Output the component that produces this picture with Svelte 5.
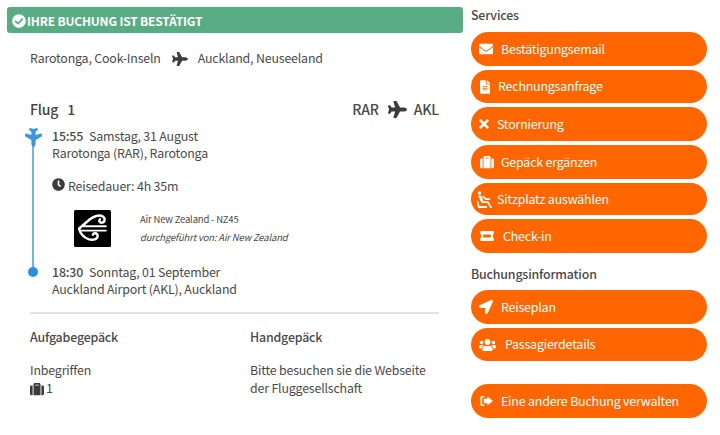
<script>
  const plane = 'M480 192H365.71L260.61 8.06A16.014 16.014 0 0 0 246.71 0h-65.5c-10.63 0-18.3 10.17-15.38 20.39L214.86 192H112l-43.2-57.6c-3.02-4.03-7.77-6.4-12.8-6.4H16.01C5.6 128-2.04 137.78.49 147.88L32 256 .49 364.12C-2.04 374.22 5.6 384 16.01 384H56c5.04 0 9.78-2.37 12.8-6.4L112 320h102.86l-49.03 171.6c-2.92 10.22 4.75 20.4 15.38 20.4h65.5c5.74 0 11.04-3.08 13.89-8.06L365.71 320H480c35.35 0 96-28.65 96-64s-60.65-64-96-64z'
  const suitcase = 'M128 480h256V80c0-26.5-21.5-48-48-48H176c-26.5 0-48 21.5-48 48v400zm64-384h128v32H192V96zm320 80v256c0 26.5-21.5 48-48 48h-48V128h48c26.5 0 48 21.5 48 48zM96 480H48c-26.5 0-48-21.5-48-48V176c0-26.5 21.5-48 48-48h48v352z'

  const services = [
    { label: 'Bestätigungsemail', vb: '0 0 512 512', w: 14, ih: 14, left: 8, gap: 8, h: 34, d: 'M502.3 190.8c3.9-3.1 9.7-.2 9.7 4.7V400c0 26.5-21.5 48-48 48H48c-26.5 0-48-21.5-48-48V195.6c0-5 5.7-7.8 9.7-4.7 22.4 17.4 52.1 39.5 154.1 113.6 21.1 15.4 56.7 47.8 92.2 47.6 35.7.3 72-32.8 92.3-47.6 102-74.1 131.6-96.3 154-113.7zM256 320c23.2.4 56.6-29.2 73.4-41.4 132.7-96.3 142.8-104.7 173.4-128.7 5.8-4.5 9.2-11.5 9.2-18.9v-19c0-26.5-21.5-48-48-48H48C21.5 64 0 85.500 0 112v19c0 7.4 3.4 14.3 9.2 18.9 30.6 23.9 40.7 32.4 173.4 128.7 16.8 12.2 50.2 41.8 73.4 41.4z' },
    { label: 'Rechnungsanfrage', vb: '0 0 384 512', w: 10, ih: 14, left: 9, gap: 8, h: 33, d: 'M224 136V0H24C10.7 0 0 10.7 0 24v464c0 13.3 10.7 24 24 24h336c13.3 0 24-10.7 24-24V160H248c-13.2 0-24-10.8-24-24zm64 236c0 6.6-5.4 12-12 12H108c-6.6 0-12-5.4-12-12v-8c0-6.6 5.4-12 12-12h168c6.6 0 12 5.4 12 12v8zm0-64c0 6.6-5.4 12-12 12H108c-6.6 0-12-5.4-12-12v-8c0-6.6 5.4-12 12-12h168c6.6 0 12 5.4 12 12v8zm0-72v8c0 6.6-5.4 12-12 12H108c-6.6 0-12-5.4-12-12v-8c0-6.6 5.4-12 12-12h168c6.6 0 12 5.4 12 12zm96-114.1v6.1H256V0h6.1c6.4 0 12.5 2.5 17 7l97.9 98c4.5 4.5 7 10.6 7 16.9z' },
    { label: 'Stornierung', vb: '0 0 352 512', w: 10, ih: 14, left: 8, gap: 8, h: 34, d: 'M242.72 256l100.07-100.07c12.28-12.28 12.28-32.19 0-44.48l-22.24-22.24c-12.28-12.28-32.19-12.28-44.48 0L176 189.28 75.93 89.21c-12.28-12.28-32.19-12.28-44.48 0L9.21 111.45c-12.28 12.28-12.28 32.19 0 44.48L109.28 256 9.21 356.07c-12.28 12.28-12.28 32.19 0 44.48l22.24 22.24c12.28 12.28 32.2 12.28 44.48 0L176 322.72l100.07 100.07c12.28 12.28 32.2 12.28 44.48 0l22.24-22.24c12.28-12.28 12.28-32.19 0-44.48L242.72 256z' },
    { label: 'Gepäck ergänzen', vb: '0 0 512 512', w: 14, ih: 14, left: 9, gap: 7, h: 34, d: suitcase },
    { label: 'Sitzplatz auswählen', vb: '0 0 15 17', w: 15, ih: 17, left: 6, gap: 5, h: 32, d: 'M2.500 .2a1.700 1.700 0 1 1 0 3.400 1.700 1.700 0 0 1 0-3.400zM2.300 4.300c1-.4 1.900 0 2.200 1l1.900 4.900h3.700c.8 0 1.300.3 1.700.9l2.900 4.600c.3.600.1 1-.3 1.200-.5.300-1 .1-1.300-.4L10.300 12H5.500c-.7 0-1.200-.4-1.500-1L1.600 6c-.4-1 0-1.400.7-1.700zM.2 9.700c.5-.1.800.1 1 .6l1.300 4.700h6.700c.5 0 .8.400.8.900s-.3 1-.8 1H1.800c-.4 0-.7-.2-.8-.6L-.3 10.600c-.1-.5 0-.8.500-.9zM6.200 4.600l3.200 2.600h2.900c.6 0 1 .4 1 .9s-.4 1-1 1H9c-.3 0-.5-.1-.7-.3L5.400 6.300z' },
    { label: 'Check-in', vb: '0 0 576 512', w: 16, ih: 14, left: 8, gap: 8, h: 34, d: 'M70 70h436c18 0 30 12 30 30v76c-20 4-34 40-34 80s14 76 34 80v76c0 18-12 30-30 30H70c-18 0-30-12-30-30v-76c20-4 34-40 34-80s-14-76-34-80v-76c0-18 12-30 30-30zm90 130c-6 0-10 4-10 10v92c0 6 4 10 10 10h256c6 0 10-4 10-10v-92c0-6-4-10-10-10H160z' }
  ]

  const infos = [
    { label: 'Reiseplan', vb: '0 0 512 512', w: 14, ih: 14, left: 8, gap: 8, h: 34, d: 'M444.52 3.52L28.74 195.42c-47.97 22.39-31.98 92.75 19.19 92.75h175.91v175.91c0 51.17 70.36 67.17 92.75 19.19l191.9-415.78c15.99-38.39-25.59-79.97-63.97-63.97z' },
    { label: 'Passagierdetails', vb: '0 0 640 512', w: 17, ih: 14, left: 8, gap: 9, h: 33, d: 'M96 224c35.3 0 64-28.7 64-64s-28.7-64-64-64-64 28.7-64 64 28.7 64 64 64zm448 0c35.3 0 64-28.7 64-64s-28.7-64-64-64-64 28.7-64 64 28.7 64 64 64zm32 32h-64c-17.6 0-33.5 7.1-45.1 18.6 40.3 22.1 68.9 62 75.1 109.4h66c17.7 0 32-14.3 32-32v-32c0-35.3-28.7-64-64-64zm-256 0c61.9 0 112-50.1 112-112S381.9 32 320 32 208 82.1 208 144s50.1 112 112 112zm76.8 32h-8.3c-20.8 10-43.9 16-68.5 16s-47.6-6-68.5-16h-8.3C179.6 288 128 339.6 128 403.2V432c0 26.5 21.5 48 48 48h288c26.5 0 48-21.5 48-48v-28.8c0-63.6-51.6-115.2-115.2-115.2zm-223.7-13.4C161.5 263.1 145.6 256 128 256H64c-35.3 0-64 28.7-64 64v32c0 17.7 14.3 32 32 32h65.9c6.3-47.4 34.9-87.3 75.2-109.4z' }
  ]

  const manage = { label: 'Eine andere Buchung verwalten', vb: '0 0 512 512', w: 13, ih: 14, left: 9, gap: 8, h: 34, d: 'M170 60H70C38 60 20 80 20 110v292c0 30 18 50 50 50h100v-60H84V120h86zM290 80l222 176-222 176V340H150V172h140z' }
</script>

{#snippet pill(b)}
  <a class="pill" href="#top" style="height:{b.h}px;padding-left:{b.left}px">
    <svg viewBox={b.vb} style="width:{b.w}px;height:{b.ih}px;margin-right:{b.gap}px" class="pill-icon"><path d={b.d} /></svg>
    <span>{b.label}</span>
  </a>
{/snippet}

<div class="page">
  <main class="left">
    <div class="banner">
      <svg viewBox="0 0 512 512" class="check"><path d="M504 256c0 136.967-111.033 248-248 248S8 392.967 8 256 119.033 8 256 8s248 111.033 248 248zM227.314 387.314l184-184c6.248-6.248 6.248-16.379 0-22.627l-22.627-22.627c-6.248-6.249-16.379-6.249-22.628 0L216 308.118l-70.059-70.059c-6.248-6.248-16.379-6.248-22.628 0l-22.627 22.627c-6.248 6.248-6.248 16.379 0 22.627l104 104c6.249 6.25 16.379 6.25 22.628.001z" /></svg>
      <span>IHRE BUCHUNG IST BESTÄTIGT</span>
    </div>

    <div class="route">
      <span>Rarotonga, Cook-Inseln</span>
      <svg viewBox="0 0 576 512" class="plane"><path d={plane} /></svg>
      <span>Auckland, Neuseeland</span>
    </div>

    <div class="flight-head">
      <h2>Flug<span class="num">1</span></h2>
      <div class="codes">
        <span>RAR</span>
        <svg viewBox="0 0 576 512" class="plane big"><path d={plane} /></svg>
        <span>AKL</span>
      </div>
    </div>

    <div class="timeline">
      <span class="line"></span>
      <svg viewBox="0 0 576 512" class="tl-plane"><path d={plane} /></svg>
      <span class="tl-dot"></span>

      <p class="stop"><b>15:55</b>Samstag, 31 August<br />Rarotonga (RAR), Rarotonga</p>
      <p class="duration">
        <svg viewBox="0 0 512 512" class="clock"><path d="M256,8C119,8,8,119,8,256S119,504,256,504,504,393,504,256,393,8,256,8Zm92.49,313h0l-20,25a16,16,0,0,1-22.49,2.5h0l-67-49.72a40,40,0,0,1-15-31.23V112a16,16,0,0,1,16-16h32a16,16,0,0,1,16,16V256l58,42.5A16,16,0,0,1,348.49,321Z" /></svg>
        <span>Reisedauer: 4h 35m</span>
      </p>
      <div class="carrier">
        <svg viewBox="0 0 36 36" class="logo">
          <rect width="36" height="36" rx="1.500" fill="#000" />
          <g fill="none" stroke="#fff" stroke-linecap="round">
            <path d="M5 18 15.500 9c3.500-3 9-4.500 12-3 3.200 1.600 3 5.800-.3 6.300-2.200.3-3.400-1.800-2-3.300" stroke-width="2.400" />
            <path d="M9 15.800h22M6 20h25" stroke-width="1.800" />
            <path d="M5 18.500c1.500 5.500 4 8 9 9.800 4.500 1.500 9 .2 9-3.300 0-2.600-3.800-3.200-4.600-1" stroke-width="2.400" />
          </g>
        </svg>
        <div class="carrier-text">
          <span>Air New Zealand - NZ45</span>
          <em>durchgeführt von: Air New Zealand</em>
        </div>
      </div>
      <p class="stop last"><b>18:30</b>Sonntag, 01 September<br />Auckland Airport (AKL), Auckland</p>
    </div>

    <hr />

    <div class="baggage">
      <section>
        <h3>Aufgabegepäck</h3>
        <p>Inbegriffen<br /><svg viewBox="0 0 512 512" class="bag"><path d={suitcase} /></svg>1</p>
      </section>
      <section>
        <h3>Handgepäck</h3>
        <p>Bitte besuchen sie die Webseite<br />der Fluggesellschaft</p>
      </section>
    </div>
  </main>

  <aside class="right">
    <h4>Services</h4>
    <nav class="pills first">
      {#each services as b}
        {@render pill(b)}
      {/each}
    </nav>
    <h4 class="info-title">Buchungsinformation</h4>
    <nav class="pills">
      {#each infos as b}
        {@render pill(b)}
      {/each}
    </nav>
    <nav class="pills manage">
      {@render pill(manage)}
    </nav>
  </aside>
</div>

<style>
  :global(body) {
    background: #fff;
    font-family: 'Noto Sans CJK SC', 'Noto Sans', sans-serif;
    font-size: 12.4px;
    letter-spacing: -0.18px;
    color: #4a4a4a;
  }
  .page {
    display: flex;
    gap: 8px;
    width: 720px;
    height: 435px;
    padding: 7px 13px 0 7px;
    box-sizing: border-box;
    overflow: hidden;
  }
  .left {
    width: 456px;
    flex: none;
  }
  .right {
    flex: 1;
  }
  .banner {
    display: flex;
    align-items: center;
    height: 26px;
    padding-left: 5px;
    background: #57ac84;
    border-radius: 3px;
    color: #fff;
    font-weight: 700;
    font-size: 12px;
  }
  .check {
    width: 14px;
    height: 14px;
    margin-right: 1px;
    margin-top: 2px;
    fill: #fff;
  }
  .route {
    display: flex;
    align-items: center;
    height: 20px;
    margin-top: 15px;
    padding-left: 23px;
  }
  .plane {
    width: 16px;
    height: 14px;
    margin: 1px 10px 0 11px;
    fill: #3c3c3c;
  }
  .plane.big {
    width: 19px;
    height: 17px;
    margin: 1px 7px 0 9px;
  }
  .flight-head {
    display: flex;
    justify-content: space-between;
    align-items: center;
    height: 22px;
    margin-top: 30px;
    padding: 0 24px 0 23px;
  }
  h2 {
    margin: 0;
    font-size: 14px;
    font-weight: 500;
    color: #444;
  }
  .num {
    margin-left: 9px;
  }
  .codes {
    display: flex;
    align-items: center;
    font-size: 14px;
    font-weight: 500;
  }
  .timeline {
    position: relative;
    margin-top: 8px;
    padding-left: 45px;
  }
  .line {
    position: absolute;
    left: 25px;
    top: 5px;
    width: 2px;
    height: 138px;
    background: #6cb6ec;
  }
  .tl-plane {
    position: absolute;
    left: 17px;
    top: 1px;
    width: 19px;
    height: 17px;
    fill: #3a97de;
    transform: rotate(90deg);
  }
  .tl-dot {
    position: absolute;
    left: 21px;
    top: 139px;
    width: 10px;
    height: 10px;
    border-radius: 50%;
    background: #2a8fdc;
  }
  p {
    margin: 0;
  }
  .stop {
    line-height: 17px;
  }
  .stop b {
    font-weight: 500;
    margin-right: 6px;
  }
  .duration {
    display: flex;
    align-items: center;
    height: 18px;
    margin-top: 15px;
  }
  .clock {
    width: 13px;
    height: 13px;
    margin-right: 3px;
    margin-top: -3px;
    fill: #3c3c3c;
  }
  .carrier {
    display: flex;
    align-items: center;
    height: 37px;
    margin-top: 15px;
    padding-left: 22px;
  }
  .logo {
    width: 37px;
    height: 37px;
    flex: none;
  }
  .carrier-text {
    display: flex;
    flex-direction: column;
    gap: 3px;
    margin-left: 29px;
    font-size: 9.5px;
    line-height: 15px;
  }
  .carrier-text em {
    font-style: italic;
  }
  .last {
    margin-top: 17px;
  }
  hr {
    margin: 14px 24px 0 23px;
    border: 0;
    border-top: 2px solid #e2e2e2;
  }
  .baggage {
    display: flex;
    margin-top: 14px;
    padding-left: 23px;
  }
  section {
    flex: none;
    width: 220px;
  }
  h3 {
    margin: 0;
    font-size: 12.4px;
    font-weight: 500;
    line-height: 18px;
  }
  section p {
    margin-top: 15px;
    line-height: 18px;
  }
  .bag {
    width: 14px;
    height: 14px;
    margin-right: 2px;
    vertical-align: -3px;
    fill: #3c3c3c;
  }
  h4 {
    margin: -1px 0 0;
    height: 18px;
    font-size: 12.4px;
    font-weight: 500;
    line-height: 18px;
  }
  .info-title {
    margin-top: 12px;
  }
  .pills {
    display: flex;
    flex-direction: column;
    gap: 4px;
    margin-top: 7px;
  }
  .pills.first {
    margin-top: 8px;
  }
  .manage {
    margin-top: 23px;
  }
  .pill {
    display: flex;
    align-items: center;
    box-sizing: border-box;
    border-radius: 17px;
    background: #ff6600;
    color: #fff;
    font-size: 12.4px;
    text-decoration: none;
  }
  .pill span {
    margin-top: -1px;
  }
  .pill-icon {
    flex: none;
    fill: #fff;
    overflow: visible;
  }
</style>
